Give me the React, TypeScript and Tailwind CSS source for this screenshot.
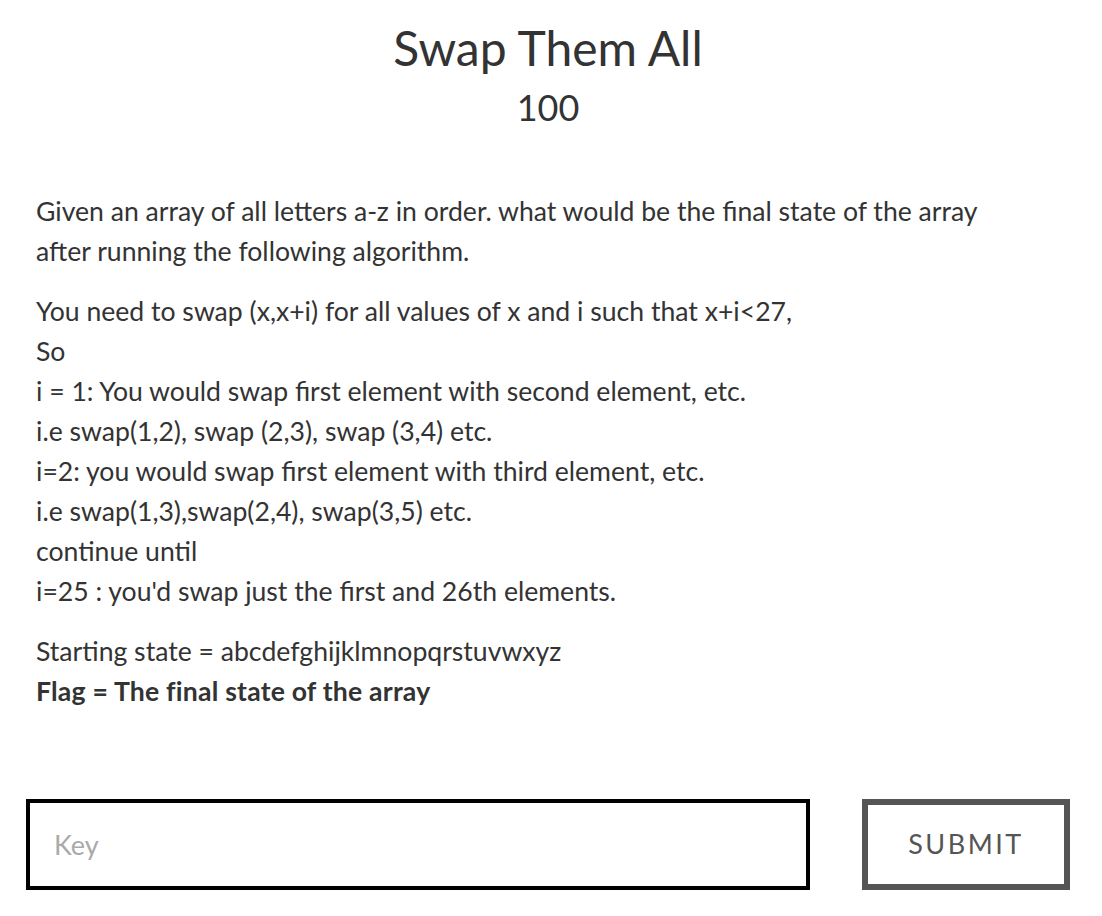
import React, { useState } from 'react';

const lines: string[] = [
  'You need to swap (x,x+i) for all values of x and i such that x+i<27,',
  'So',
  'i = 1: You would swap first element with second element, etc.',
  'i.e swap(1,2), swap (2,3), swap (3,4) etc.',
  'i=2: you would swap first element with third element, etc.',
  'i.e swap(1,3),swap(2,4), swap(3,5) etc.',
  'continue until',
  "i=25 : you'd swap just the first and 26th elements.",
];

const App: React.FC = () => {
  const [key, setKey] = useState('');

  return (
    <div
      className="min-h-screen bg-white text-[#333] pl-[26px] pr-[32px]"
      style={{ fontFamily: 'Lato, "Open Sans", sans-serif' }}
    >
      <div className="text-center pt-[18px]">
        <h1 className="text-[48px] leading-[60px] font-normal text-[#333]">Swap Them All</h1>
        <h2 className="text-[36px] leading-[46px] mt-[6px] font-normal text-[#333]">100</h2>
      </div>

      <div className="pl-[10px] pr-[50px] mt-[61px] text-[26.6px] leading-[40px]">
        <p>
          Given an array of all letters a-z in order. what would be the final state of the array
          after running the following algorithm.
        </p>
        <p className="mt-[20px]">
          {lines.map((line, i) => (
            <span key={i} className="block">
              {line}
            </span>
          ))}
        </p>
        <p className="mt-[20px]">
          Starting state = abcdefghijklmnopqrstuvwxyz
          <br />
          <strong className="font-bold tracking-[0.2px]">Flag = The final state of the array</strong>
        </p>
      </div>

      <form
        className="flex items-stretch justify-between mt-[88px]"
        onSubmit={e => e.preventDefault()}
      >
        <input
          value={key}
          onChange={e => setKey(e.target.value)}
          placeholder="Key"
          className="w-[784px] h-[91px] border-[4px] border-black px-[24px] text-[27px] text-[#333] placeholder:text-[#aaa] outline-none"
          style={{ fontFamily: 'Lato, sans-serif' }}
        />
        <button
          type="submit"
          className="w-[208px] h-[91px] border-[6px] border-[#555] text-[#555] text-[27px] tracking-[2.5px] bg-white"
          style={{ fontFamily: 'Lato, sans-serif' }}
        >
          SUBMIT
        </button>
      </form>
    </div>
  );
};

export default App;
